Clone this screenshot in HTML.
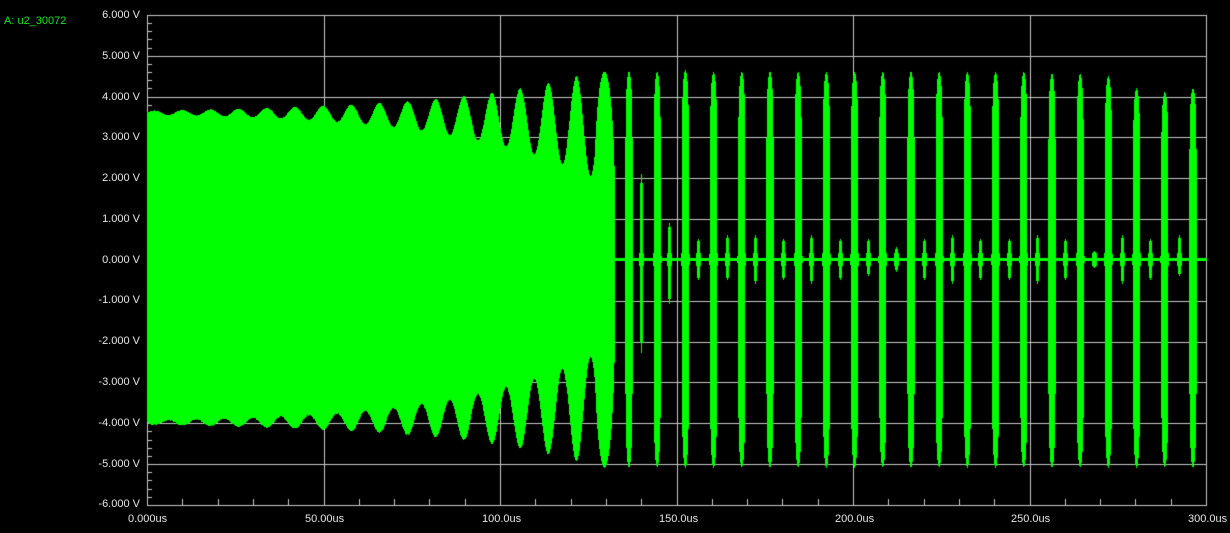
<!DOCTYPE html>
<html><head><style>
html,body{margin:0;padding:0;background:#000;width:1230px;height:533px;overflow:hidden}
canvas{position:absolute;left:0;top:0}
.t{position:absolute;font-family:"Liberation Sans",Arial,sans-serif;font-size:11px;color:#e6e6e6;white-space:nowrap}
.yl{width:80px;text-align:right;left:60px}
</style></head><body>
<canvas id="c" width="1230" height="533"></canvas>
<div class="t" style="left:4px;top:15px;color:#22e022">A: u2_30072</div>
<div class="t yl" style="top:9px">6.000 V</div>
<div class="t yl" style="top:50px">5.000 V</div>
<div class="t yl" style="top:91px">4.000 V</div>
<div class="t yl" style="top:131px">3.000 V</div>
<div class="t yl" style="top:172px">2.000 V</div>
<div class="t yl" style="top:213px">1.000 V</div>
<div class="t yl" style="top:254px">0.000 V</div>
<div class="t yl" style="top:294px">-1.000 V</div>
<div class="t yl" style="top:335px">-2.000 V</div>
<div class="t yl" style="top:376px">-3.000 V</div>
<div class="t yl" style="top:417px">-4.000 V</div>
<div class="t yl" style="top:458px">-5.000 V</div>
<div class="t yl" style="top:498px">-6.000 V</div>
<div class="t" style="left:128px;top:513px">0.000us</div>
<div class="t" style="left:305px;top:513px">50.00us</div>
<div class="t" style="left:482px;top:513px">100.0us</div>
<div class="t" style="left:659px;top:513px">150.0us</div>
<div class="t" style="left:835px;top:513px">200.0us</div>
<div class="t" style="left:1011px;top:513px">250.0us</div>
<div class="t" style="left:1188px;top:513px">300.0us</div>
<script>
(function(){
var c=document.getElementById('c').getContext('2d');
var X0=147,X1=1206,Y0=15,Y1=505;
function vy(v){return 259.5-v*40.8;}
c.strokeStyle='#c8c8c8';c.lineWidth=1;
for(var i=0;i<=12;i++){var y=Math.round(Y0+i*40.83)+0.5;c.beginPath();c.moveTo(X0,y);c.lineTo(X1+1,y);c.stroke();}
for(var i=0;i<=6;i++){var x=Math.round(X0+i*176.5)+0.5;c.beginPath();c.moveTo(x,Y0);c.lineTo(x,Y1);c.stroke();}
for(var i=0;i<60;i++){var y=Math.round(Y0+i*8.166)+0.5;c.beginPath();c.moveTo(X0,y);c.lineTo(X0+5,y);c.stroke();}
for(var i=0;i<30;i++){var x=Math.round(X0+i*35.3)+0.5;c.beginPath();c.moveTo(x,Y1);c.lineTo(x,Y1-6);c.stroke();}
c.fillStyle='#00ff00';
var P=28.15;
for(var x=147;x<597;x++){
 var r=0.05*Math.exp((x-147)/137);
 var tt=(x-147)/428;
 var m=3.6-0.25*tt*tt*tt;
 var cs=Math.cos(2*Math.PI*(x-604)/P);
 var hi=m+r*cs, lo=-(m+0.4+r*1.05*cs);
 if(hi<0.3)hi=0.3; if(lo>-0.3)lo=-0.3;
 c.fillRect(x,Math.round(vy(hi)),1,Math.round(vy(lo)-vy(hi)));
}
function lobe(cx,hw,a,b,p){
 for(var x=Math.floor(cx-hw);x<=Math.ceil(cx+hw);x++){
  var u=(x-cx)/hw; if(Math.abs(u)>1)continue;
  var s=Math.pow(1-u*u,p||0.35);
  var y1=Math.round(vy(a*s)),y2=Math.round(vy(-b*s));
  c.fillRect(x,y1,1,Math.max(1,y2-y1));
 }
}
lobe(604,11,4.6,5.1,0.4);
c.fillRect(590,258,617,3);
var tops=[4.6,4.6,4.65,4.6,4.6,4.6,4.6,4.6,4.6,4.6,4.6,4.6,4.6,4.6,4.6,4.55,4.55,4.5,4.2,4.1,4.2,3.9];
for(var k=0;k<21;k++){
 var cx=628.5+k*28.2;
 lobe(cx,3.6,tops[k],5.1,0.15);
 lobe(cx,4.5,0.3,0.3,0.5);
}
var small=[[641,2.1,2.3],[669,0.9,1.1],[698,0.5,0.5],[727,0.6,0.5],[755,0.6,0.6],[783,0.5,0.5],[811,0.6,0.6],[840,0.5,0.5],[868,0.5,0.4],[896,0.3,0.3],[924,0.5,0.5],[952,0.6,0.6],[980,0.5,0.5],[1009,0.5,0.5],[1037,0.6,0.6],[1065,0.5,0.5],[1094,0.2,0.2],[1122,0.6,0.6],[1150,0.5,0.5],[1179,0.6,0.4]];
for(var i=0;i<small.length;i++){var q=small[i];lobe(q[0],1.5,q[1],q[2],0.2);lobe(q[0],3,0.2,0.2,0.5);}
})();
</script>
</body></html>
